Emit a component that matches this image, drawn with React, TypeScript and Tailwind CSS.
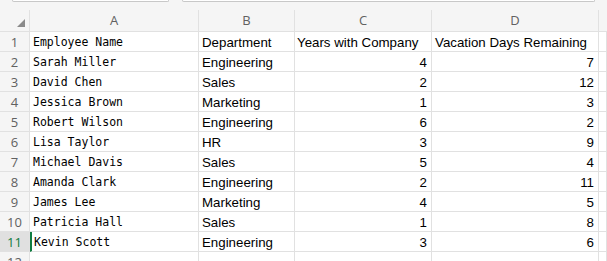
import React from "react";

type Row = { name: string; dept: string; years: number; days: number };

const rows: Row[] = [
  { name: "Sarah Miller", dept: "Engineering", years: 4, days: 7 },
  { name: "David Chen", dept: "Sales", years: 2, days: 12 },
  { name: "Jessica Brown", dept: "Marketing", years: 1, days: 3 },
  { name: "Robert Wilson", dept: "Engineering", years: 6, days: 2 },
  { name: "Lisa Taylor", dept: "HR", years: 3, days: 9 },
  { name: "Michael Davis", dept: "Sales", years: 5, days: 4 },
  { name: "Amanda Clark", dept: "Engineering", years: 2, days: 11 },
  { name: "James Lee", dept: "Marketing", years: 4, days: 5 },
  { name: "Patricia Hall", dept: "Sales", years: 1, days: 8 },
  { name: "Kevin Scott", dept: "Engineering", years: 3, days: 6 },
];

const cols = "grid grid-cols-[30px_169px_96px_137px_167px_1fr]";
const cell = "h-[20px] border-r border-b border-[#e1e1e1] bg-white flex items-center pt-[3px] overflow-visible whitespace-nowrap";
const mono = "font-['DejaVu_Sans_Mono',monospace] text-[11.5px] text-black pl-[3px]";
const sans = "font-['Liberation_Sans',Arial,sans-serif] text-[13.3px] text-black";

function RowHead({ n, selected }: { n: number; selected?: boolean }) {
  return (
    <div
      className={
        "h-[20px] pt-[2px] border-b border-r border-[#e1e1e1] flex items-center justify-center font-['Open_Sans',sans-serif] text-[13px] " +
        (selected ? "bg-[#e0e0e0] text-[#107c41]" : "bg-[#f5f5f5] text-[#616161]")
      }
    >
      {n}
    </div>
  );
}

export default function App() {
  return (
    <div className="w-[607px] h-[261px] overflow-hidden bg-[#f5f5f5]">
      {/* formula bar remnants */}
      <div className="h-[10px] flex gap-[13px] px-[12px]">
        <div className="w-[158px] h-[2px] bg-white border-b border-x border-[#c8c8c8] rounded-b-[3px]" />
        <div className="w-[416px] h-[2px] bg-white border-b border-x border-[#c8c8c8] rounded-b-[3px]" />
      </div>

      {/* column headers */}
      <div className={cols + " h-[22px] font-['Open_Sans',sans-serif] text-[13px] text-[#616161] border-b border-[#e1e1e1]"}>
        <div className="relative border-r border-[#e1e1e1]">
          <svg className="absolute right-[4px] bottom-[4px]" width="8" height="8" viewBox="0 0 8 8">
            <polygon points="8,0 8,8 0,8" fill="#8a8a8a" />
          </svg>
        </div>
        <div className="flex items-center justify-center border-r border-[#e1e1e1]">A</div>
        <div className="flex items-center justify-center border-r border-[#e1e1e1]">B</div>
        <div className="flex items-center justify-center border-r border-[#e1e1e1]">C</div>
        <div className="flex items-center justify-center border-r border-[#e1e1e1]">D</div>
        <div />
      </div>

      {/* header row */}
      <div className={cols}>
        <RowHead n={1} />
        <div className={cell + " " + mono}>Employee Name</div>
        <div className={cell + " " + sans + " pl-[3px]"}>Department</div>
        <div className={cell + " " + sans + " pl-[2px]"}>Years with Company</div>
        <div className={cell + " " + sans + " pl-[3px]"}>Vacation Days Remaining</div>
        <div className={cell} />
      </div>

      {rows.map((r, i) => {
        const selected = i === rows.length - 1;
        return (
          <div key={r.name} className={cols}>
            <RowHead n={i + 2} selected={selected} />
            <div className={cell + " " + mono + (selected ? " border-l-2 border-l-[#107c41] !pl-[2px]" : "")}>{r.name}</div>
            <div className={cell + " " + sans + " pl-[3px]"}>{r.dept}</div>
            <div className={cell + " " + sans + " justify-end pr-[4px]"}>{r.years}</div>
            <div className={cell + " " + sans + " justify-end pr-[4px]"}>{r.days}</div>
            <div className={cell} />
          </div>
        );
      })}

      <div className={cols}>
        <RowHead n={12} />
        <div className={cell} />
        <div className={cell} />
        <div className={cell} />
        <div className={cell} />
        <div className={cell} />
      </div>
    </div>
  );
}
